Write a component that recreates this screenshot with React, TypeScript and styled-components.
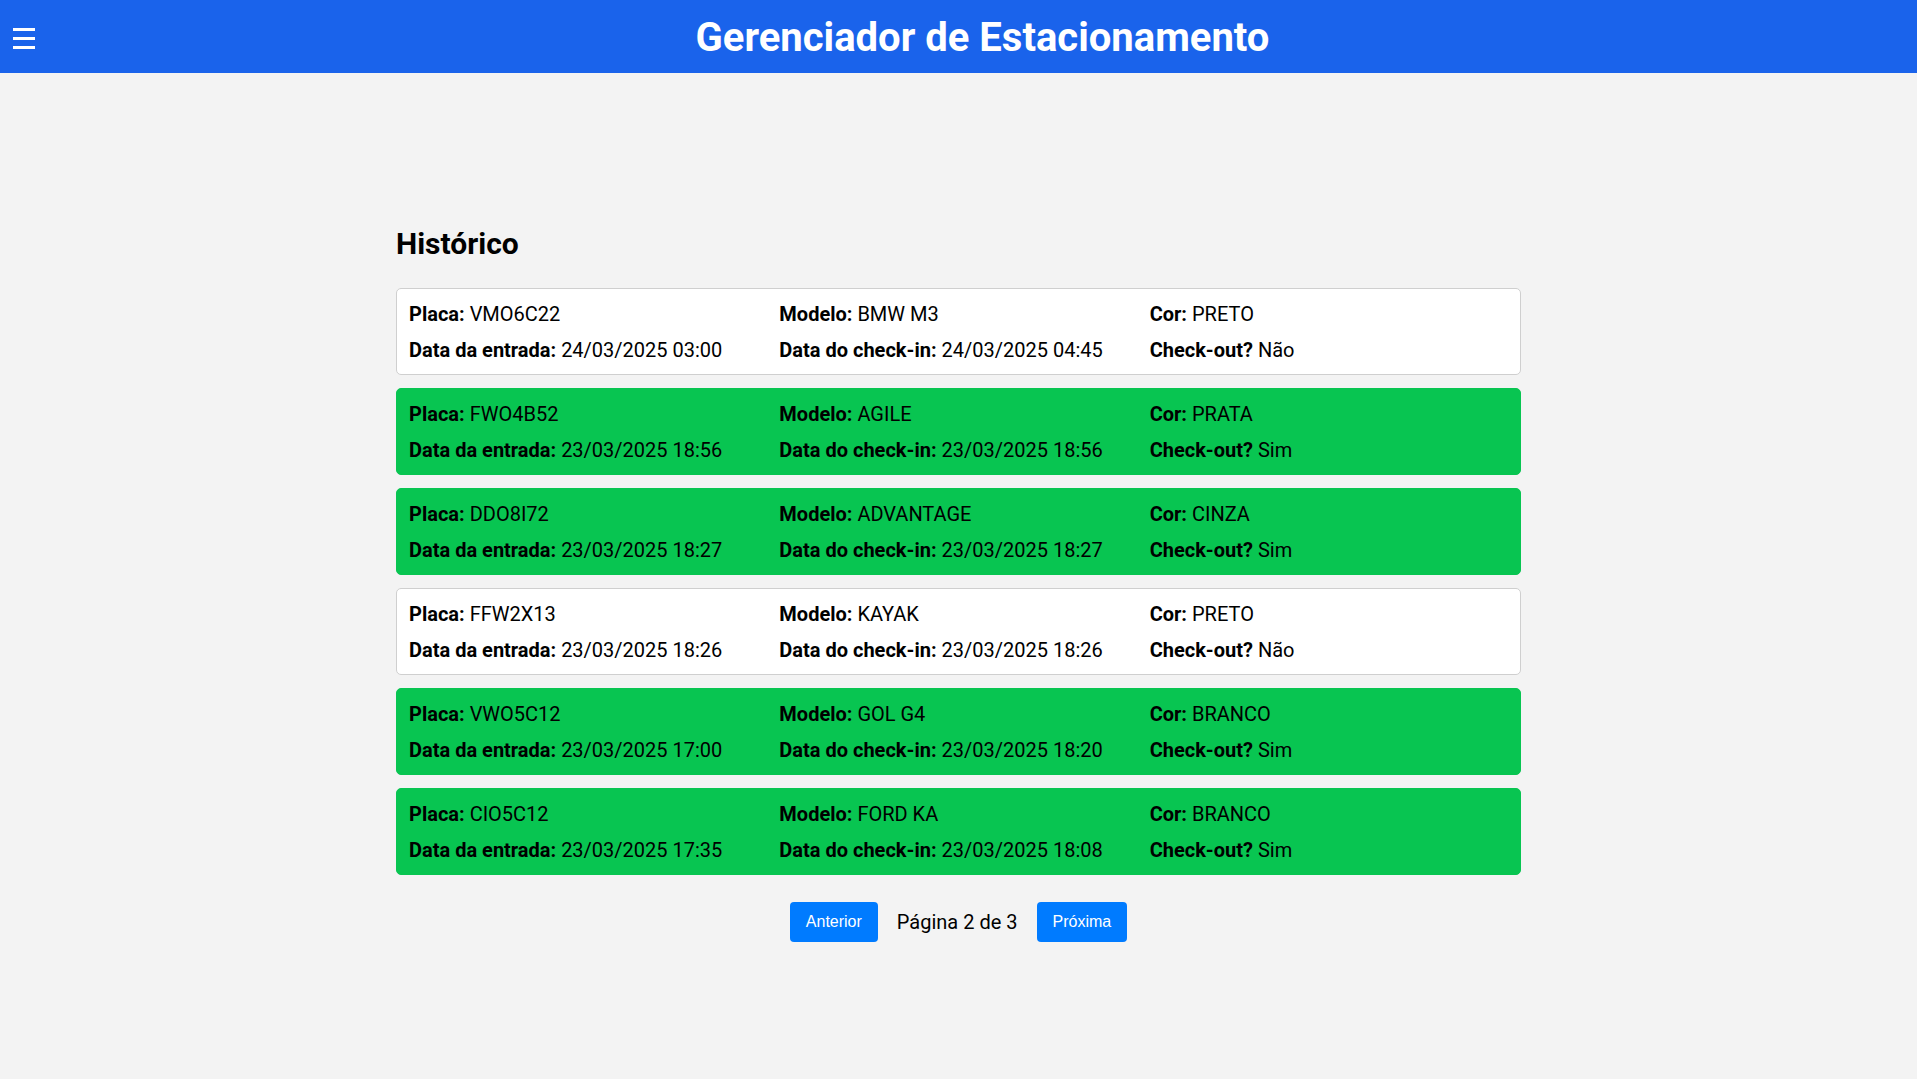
import React from "react";
import styled, { createGlobalStyle } from "styled-components";

const GlobalStyle = createGlobalStyle`
  * { box-sizing: border-box; }
  html, body { margin: 0; padding: 0; }
  body {
    background: #f3f3f3;
    font-family: Roboto, "Liberation Sans", Arial, sans-serif;
    color: #000;
  }
`;

const Header = styled.header`
  height: 73px;
  background: #1a63eb;
  display: flex;
  align-items: center;
`;

const MenuButton = styled.button`
  width: 48px;
  height: 73px;
  padding: 4px 13px 0;
  border: none;
  background: transparent;
  display: flex;
  flex-direction: column;
  justify-content: center;
  gap: 6px;
  cursor: pointer;
`;

const MenuBar = styled.span`
  display: block;
  width: 22px;
  height: 3px;
  background: #fff;
`;

const HeaderTitle = styled.h1`
  flex: 1;
  margin: 0;
  padding-top: 3px;
  text-align: center;
  color: #fff;
  font-family: Roboto, "Liberation Sans", Arial, sans-serif;
  font-weight: 700;
  font-size: 40px;
  line-height: 46px;
`;

const Main = styled.main`
  max-width: 1125px;
  margin: 0 auto;
  padding-top: 153px;
`;

const SectionTitle = styled.h2`
  margin: 0 0 27px;
  font-size: 30px;
  line-height: 35px;
  font-weight: 700;
`;

const Card = styled.div<{ $done: boolean }>`
  display: grid;
  grid-template-columns: repeat(3, 1fr);
  column-gap: 12px;
  row-gap: 12px;
  padding: 13px 12px 12px;
  margin-bottom: 13px;
  border-radius: 5px;
  border: 1px solid ${(p) => (p.$done ? "#08c551" : "#cfcfcf")};
  background: ${(p) => (p.$done ? "#08c551" : "#ffffff")};
`;

const Field = styled.div`
  font-size: 20px;
  line-height: 24px;
  white-space: nowrap;
`;

const Label = styled.strong`
  font-weight: 700;
`;

const Pagination = styled.div`
  display: flex;
  justify-content: center;
  align-items: center;
  gap: 19px;
  margin-top: 27px;
`;

const PageButton = styled.button`
  height: 40px;
  padding: 0 16px;
  border: none;
  border-radius: 4px;
  background: #007bff;
  color: #fff;
  font-family: "Liberation Sans", Arial, sans-serif;
  font-size: 16px;
  cursor: pointer;
`;

const PageInfo = styled.span`
  font-size: 20px;
  line-height: 24px;
`;

type Entry = {
  placa: string;
  modelo: string;
  cor: string;
  entrada: string;
  checkin: string;
  checkout: boolean;
};

const entries: Entry[] = [
  { placa: "VMO6C22", modelo: "BMW M3", cor: "PRETO", entrada: "24/03/2025 03:00", checkin: "24/03/2025 04:45", checkout: false },
  { placa: "FWO4B52", modelo: "AGILE", cor: "PRATA", entrada: "23/03/2025 18:56", checkin: "23/03/2025 18:56", checkout: true },
  { placa: "DDO8I72", modelo: "ADVANTAGE", cor: "CINZA", entrada: "23/03/2025 18:27", checkin: "23/03/2025 18:27", checkout: true },
  { placa: "FFW2X13", modelo: "KAYAK", cor: "PRETO", entrada: "23/03/2025 18:26", checkin: "23/03/2025 18:26", checkout: false },
  { placa: "VWO5C12", modelo: "GOL G4", cor: "BRANCO", entrada: "23/03/2025 17:00", checkin: "23/03/2025 18:20", checkout: true },
  { placa: "CIO5C12", modelo: "FORD KA", cor: "BRANCO", entrada: "23/03/2025 17:35", checkin: "23/03/2025 18:08", checkout: true },
];

export default function App() {
  return (
    <>
      <GlobalStyle />
      <Header>
        <MenuButton aria-label="menu">
          <MenuBar />
          <MenuBar />
          <MenuBar />
        </MenuButton>
        <HeaderTitle>Gerenciador de Estacionamento</HeaderTitle>
      </Header>
      <Main>
        <SectionTitle>Histórico</SectionTitle>
        {entries.map((e) => (
          <Card key={e.placa} $done={e.checkout}>
            <Field><Label>Placa:</Label> {e.placa}</Field>
            <Field><Label>Modelo:</Label> {e.modelo}</Field>
            <Field><Label>Cor:</Label> {e.cor}</Field>
            <Field><Label>Data da entrada:</Label> {e.entrada}</Field>
            <Field><Label>Data do check-in:</Label> {e.checkin}</Field>
            <Field><Label>Check-out?</Label> {e.checkout ? "Sim" : "Não"}</Field>
          </Card>
        ))}
        <Pagination>
          <PageButton>Anterior</PageButton>
          <PageInfo>Página 2 de 3</PageInfo>
          <PageButton>Próxima</PageButton>
        </Pagination>
      </Main>
    </>
  );
}
